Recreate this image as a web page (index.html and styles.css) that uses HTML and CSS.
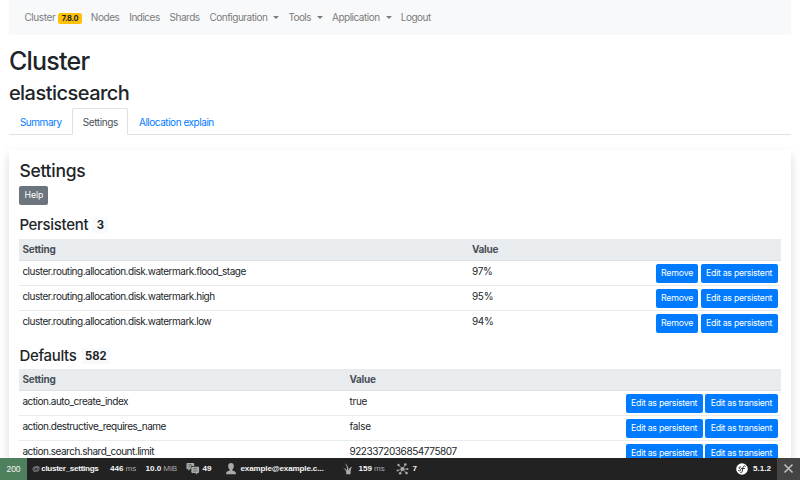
FILE: index.html
```
<!DOCTYPE html>
<html lang="en">
<head>
<meta charset="utf-8">
<title>Cluster settings</title>
<link rel="stylesheet" href="styles.css">
</head>
<body>
<div class="container">
  <nav class="navbar">
    <a class="nav-cluster">Cluster</a><span class="version">7.8.0</span>
    <a class="nav-nodes">Nodes</a><a class="nav-indices">Indices</a><a class="nav-shards">Shards</a>
    <a class="nav-config caret">Configuration</a><a class="nav-tools caret">Tools</a><a class="nav-app caret">Application</a><a>Logout</a>
  </nav>
  <h1>Cluster</h1>
  <h2>elasticsearch</h2>
  <div class="tabs"><a class="tab">Summary</a><a class="tab active">Settings</a><a class="tab">Allocation explain</a></div>
  <main class="card">
    <h3>Settings</h3>
    <button class="btn help">Help</button>
    <h4>Persistent <span class="count">3</span></h4>
    <div class="table persistent">
      <div class="row head"><span>Setting</span><span>Value</span><span></span></div>
      <div class="row"><span>cluster.routing.allocation.disk.watermark.flood_stage</span><span>97%</span><span class="actions"><button class="btn remove">Remove</button><button class="btn edit">Edit as persistent</button></span></div>
      <div class="row"><span>cluster.routing.allocation.disk.watermark.high</span><span>95%</span><span class="actions"><button class="btn remove">Remove</button><button class="btn edit">Edit as persistent</button></span></div>
      <div class="row"><span>cluster.routing.allocation.disk.watermark.low</span><span>94%</span><span class="actions"><button class="btn remove">Remove</button><button class="btn edit">Edit as persistent</button></span></div>
    </div>
    <h4 class="defaults-title">Defaults <span class="count">582</span></h4>
    <div class="table defaults">
      <div class="row head"><span>Setting</span><span>Value</span><span></span></div>
      <div class="row"><span>action.auto_create_index</span><span>true</span><span class="actions"><button class="btn edit">Edit as persistent</button><button class="btn transient">Edit as transient</button></span></div>
      <div class="row"><span>action.destructive_requires_name</span><span>false</span><span class="actions"><button class="btn edit">Edit as persistent</button><button class="btn transient">Edit as transient</button></span></div>
      <div class="row"><span>action.search.shard_count.limit</span><span class="digits">9223372036854775807</span><span class="actions"><button class="btn edit">Edit as persistent</button><button class="btn transient">Edit as transient</button></span></div>
    </div>
  </main>
</div>
<footer class="toolbar">
  <div class="status">200</div>
  <div class="item route"><i>@</i> <b>cluster_settings</b></div>
  <div class="item time"><b>446</b> <i>ms</i></div>
  <div class="item memory"><b>10.0</b> <i>MiB</i></div>
  <div class="item messages">
    <svg width="14" height="14" viewBox="0 0 14 14"><path d="M1.2 1h6.3q.7 0 .7.7V4H6q-1.3 0-1.3 1.2v2.1H4L2.4 9V7.300H1.200Q.5 7.300.5 6.600V1.700Q.5 1 1.200 1Z" fill="#aaa"/><path d="M6.100 4.700h6.200q.8 0 .8.800v4.600q0 .8-.8.800h-1.200v1.800l-1.800-1.800H6.100q-.8 0-.8-.800V5.500q0-.8.8-.8Z" fill="#aaa"/><path d="M2 3h4M4 2v1M2.500 5.500 4 4M7.200 6.700h4M7.200 9h4" fill="none" stroke="#444" stroke-width=".6"/></svg><b>49</b>
  </div>
  <div class="item user">
    <svg width="12" height="14" viewBox="0 0 12 14"><path d="M6 1C4.100 1 3.200 2.300 3.200 4c0 1.700.6 3 1.500 3.700v.8L2 9.400Q1 9.900 1 12.300h10q0-2.400-1-2.900l-2.700-.9v-.8C8.200 7 8.800 5.700 8.800 4 8.800 2.300 7.900 1 6 1Z" fill="#aaa"/></svg><b>example@example.c...</b>
  </div>
  <div class="item twig">
    <svg width="12" height="14" viewBox="0 0 12 14"><path d="M4.300 12.300C4.200 8.600 3.200 6.900 1 6.300c2.300-.1 3.500.8 4.100 2.700C5.200 5.400 4.500 3.500 3 1.300 5.400 3 6.500 5.100 6.500 8.500 7 6.200 8.100 5 10.300 4.700 8.700 6.300 8.500 8.500 8.600 12.300Z" fill="#aaa"/></svg><b>159</b> <i>ms</i>
  </div>
  <div class="item http">
    <svg width="13" height="14" viewBox="0 0 13 14"><path d="m6.500 7-4-4M6.500 7l2.800-4.300M6.500 7 1.600 8.500M6.500 7l5 .1M6.500 7 4.300 11M6.500 7l4 4" stroke="#aaa" stroke-width=".8"/><g fill="#aaa"><circle cx="6.500" cy="7" r="2"/><circle cx="2.500" cy="3" r="1.200"/><circle cx="9.300" cy="2.500" r="1.300"/><circle cx="1.500" cy="8.500" r="1"/><circle cx="11.500" cy="7.100" r="1"/><circle cx="4.200" cy="11.300" r="1.300"/><circle cx="10.500" cy="11.100" r="1.300"/></g></svg><b>7</b>
  </div>
  <div class="item symfony">
    <svg width="12" height="12" viewBox="0 0 12 12"><circle cx="6" cy="6" r="5.800" fill="#fff"/><path d="M5 4.300C4.500 3.600 3 3.800 3 4.800c0 1 1.700 1 1.700 2S3.400 8.500 2.500 7.600M9.300 3.200C8.500 2.300 7.300 2.900 7 4.500L6.300 8C6 9.600 5.100 10 4.400 9.400M5.500 5.500h3" fill="none" stroke="#222" stroke-width=".9" stroke-linecap="round"/></svg><b>5.1.2</b>
  </div>
  <div class="close"><svg width="11" height="11" viewBox="0 0 11 11"><path d="m1.500 1.500 8 8m0-8-8 8" stroke="#bbb" stroke-width="1.700"/></svg></div>
</footer>
</body>
</html>
```
FILE: styles.css
```
* { box-sizing: border-box; }
html, body { height: 480px; overflow: hidden; }
body {
  margin: 0;
  background: #fff;
  color: #212529;
  font: 10px/15px Inter, "Liberation Sans", sans-serif;
}
.container { height: 480px; padding: 0 9.400px; overflow: hidden; }
.navbar {
  display: flex;
  align-items: center;
  height: 35px;
  padding-left: 15px;
  background: #f8f9fa;
  color: #7b7c7c;
  letter-spacing: -.5px;
}
.navbar a { margin-right: 9.900px; white-space: nowrap; }
.navbar .nav-cluster { margin-right: 3px; letter-spacing: -.4px; }
.navbar .nav-nodes { letter-spacing: -.45px; }
.navbar .nav-tools { letter-spacing: -.6px; }
.version {
  margin-right: 9px;
  padding: 0 3.500px;
  border-radius: 2.500px;
  background: #ffc107;
  color: #212529;
  font-size: 7.500px;
  font-weight: 700;
  line-height: 11px;
  margin-top: 2px;
  letter-spacing: -.25px;
}
.caret { display: flex; align-items: center; }
.navbar .caret { margin-right: 9.200px; }
.caret::after {
  content: "";
  margin-left: 6px;
  border: 3px solid transparent;
  border-top-color: currentColor;
  border-bottom: 0;
}
h1, h2, h3, h4 { margin: 0; font-weight: 500; }
h1 { margin: 11px 0 0 -.500px; font-size: 25px; line-height: 30px; letter-spacing: -.75px; }
h2 { margin: 5px 0 0 -.500px; font-size: 20px; line-height: 24px; letter-spacing: -.53px; }
.tabs { display: flex; height: 27px; margin-top: 3px; border-bottom: 1px solid #dee2e6; letter-spacing: -.46px; }
.tab { height: 27px; padding: 6px 9.500px; border: 1px solid transparent; color: #007bff; white-space: nowrap; }
.tab.active { border-color: #dee2e6 #dee2e6 #fff; border-radius: 2.500px 2.500px 0 0; background: #fff; color: #495057; letter-spacing: -.38px; }
.card { height: 400px; margin-top: 15px; padding: 10px; box-shadow: 0 5px 10px rgba(0, 0, 0, .15); }
h3 { font-size: 17.500px; line-height: 21px; letter-spacing: -.28px; }
h4 { display: flex; align-items: center; height: 18px; margin: 11px 0 5px; font-size: 15px; line-height: 18px; letter-spacing: -.32px; }
.defaults-title { margin: 12px 0 4px; }
.count { margin-left: 4px; padding: 0 4.500px; border-radius: 2.500px; background: #f8f9fa; font-size: 11.250px; font-weight: 700; line-height: 16px; letter-spacing: 0; }
.btn {
  display: block;
  height: 19.400px;
  padding: 0;
  border: 0;
  border-radius: 2px;
  background: #007bff;
  color: #fff;
  font: 8.750px/19px Inter, sans-serif;
  letter-spacing: -.28px;
  text-align: center;
  white-space: nowrap;
}
.help { width: 29px; margin-top: 4.500px; background: #6c757d; letter-spacing: -.1px; }
.remove { width: 42px; letter-spacing: -.15px; }
.edit { width: 77px; }
.transient { width: 72.500px; }
.row { display: grid; height: 25px; padding: 3px; border-top: 1px solid #e9ecef; letter-spacing: -.49px; }
.row.head { height: 21px; padding-top: 3.600px; border: 0; background: #e9ecef; color: #495057; font-weight: 700; letter-spacing: -.2px; }
.row.head + .row { border-top-color: #dee2e6; }
.row > span:nth-child(2):not(.digits) { letter-spacing: -.27px; }
.row .digits { letter-spacing: -.42px; }
.persistent .row { grid-template-columns: 449.500px 1fr auto; }
.defaults .row { grid-template-columns: 327px 1fr auto; }
.actions { display: flex; gap: 2.500px; }
.toolbar {
  position: fixed;
  left: 0;
  right: 0;
  bottom: 0;
  display: flex;
  height: 22.500px;
  background: #222;
  color: #f5f5f5;
  font: 8.100px/22px "Liberation Sans", Arial, sans-serif;
}
.toolbar i { color: #aaa; font-style: normal; }
.toolbar b { font-weight: 700; }
.status { width: 27px; background: #4f805d; text-align: center; font-size: 8.500px; }
.item { display: flex; align-items: center; white-space: nowrap; gap: 2px; }
.route { width: 83px; padding-left: 5px; gap: 1px; }
.route b { letter-spacing: -.3px; }
.time { width: 35.500px; }
.memory { width: 40px; }
.messages { width: 39px; gap: 3px; }
.user { width: 117px; gap: 4px; }
.user b { letter-spacing: -.16px; }
.twig { width: 54px; }
.twig svg { margin-right: 3px; }
.http { gap: 4px; }
.symfony { margin-left: auto; margin-right: 6px; gap: 5px; }
.close { display: flex; align-items: center; justify-content: center; width: 23px; background: #444; }
```
